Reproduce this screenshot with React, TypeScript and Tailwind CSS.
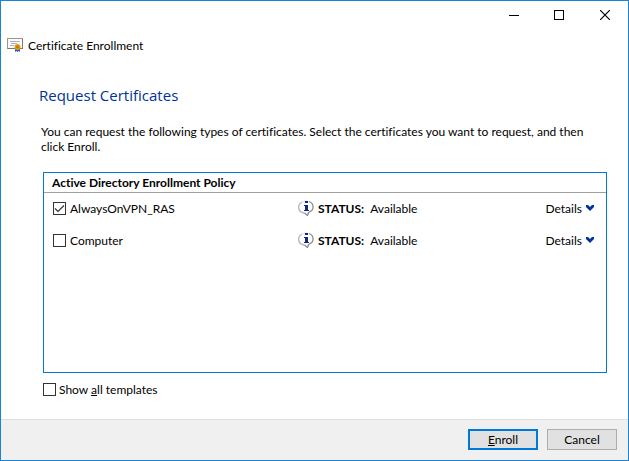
import { useState } from "react"

interface Template {
  name: string
  status: string
  checked: boolean
}

const initialTemplates: Template[] = [
  { name: "AlwaysOnVPN_RAS", status: "Available", checked: true },
  { name: "Computer", status: "Available", checked: false },
]

function CertificateIcon() {
  return (
    <svg width="16" height="16" viewBox="0 0 16 16" aria-hidden="true">
      <rect x="0.5" y="1.5" width="15" height="10" fill="#fdfcf8" stroke="#a3957f" />
      <path d="M1 11.5h15M15.5 2v10" stroke="#86775f" />
      <path d="M3 4.5h10M4 6.5h6M3 8.5h4" stroke="#a9b0e0" />
      <path d="M8 11h2.5v4l-1-1-1.500 1zM10.500 11H13v4l-1.500-1-1 1z" fill="#1f5fd0" />
      <circle cx="10.500" cy="10" r="3" fill="#e39c14" />
      <circle cx="10.500" cy="10" r="1.300" fill="#b87405" />
    </svg>
  )
}

function InfoIcon() {
  return (
    <svg width="16" height="16" viewBox="0 0 16 16" aria-hidden="true">
      <path d="M11 1.500c5.500 2 5.500 9-.5 11L9.500 15.500 6.500 13" fill="none" stroke="#8a8a8a" strokeWidth="1.300" />
      <path d="M4 2C-.5 4.500-.5 11 4.500 12.500L6.500 13" fill="none" stroke="#b5b5b5" strokeWidth="1.300" />
      <path d="M4.500 1.500a8 8 0 0 1 6 0" fill="none" stroke="#dedede" />
      <path d="M7 1h3v2H7zM6 5h4v5h1v1H6v-1h1V6H6z" fill="#10248c" />
    </svg>
  )
}

interface CheckBoxProps {
  id: string
  checked: boolean
  onChange: (checked: boolean) => void
}

function CheckBox({ id, checked, onChange }: CheckBoxProps) {
  return (
    <span className="grid shrink-0">
      <input
        id={id}
        type="checkbox"
        checked={checked}
        onChange={e => onChange(e.target.checked)}
        className="col-start-1 row-start-1 size-[13px] appearance-none border border-[#333333] bg-white"
      />
      {checked && (
        <svg
          width="13"
          height="13"
          viewBox="0 0 13 13"
          className="pointer-events-none col-start-1 row-start-1"
          aria-hidden="true"
        >
          <path d="M2 6.500l3 3 6-6" fill="none" stroke="#333" strokeWidth="1.200" />
        </svg>
      )}
    </span>
  )
}

export default function App() {
  const [templates, setTemplates] = useState(initialTemplates)
  const [showAll, setShowAll] = useState(false)

  const toggle = (index: number, checked: boolean) => {
    setTemplates(list => list.map((t, i) => (i === index ? { ...t, checked } : t)))
  }

  return (
    <div className="flex min-h-screen flex-col border border-[#1883d7] bg-white font-[Lato,'Open_Sans',sans-serif] text-[12px] leading-[15px] text-black [font-variant-ligatures:none]">
      <header>
        <div className="flex h-7 justify-end">
          <button type="button" aria-label="Minimize" className="flex w-[45px] items-center justify-center">
            <svg width="10" height="10" viewBox="0 0 10 10">
              <path d="M0 5.500h10" stroke="#000" />
            </svg>
          </button>
          <button type="button" aria-label="Maximize" className="flex w-[45px] items-center justify-center">
            <svg width="10" height="10" viewBox="0 0 10 10">
              <rect x="0.5" y="0.5" width="9" height="9" fill="none" stroke="#000" />
            </svg>
          </button>
          <button type="button" aria-label="Close" className="flex w-[47px] items-center justify-center">
            <svg width="10" height="10" viewBox="0 0 10 10">
              <path d="M0 0l10 10M10 0L0 10" stroke="#000" strokeWidth="1.200" />
            </svg>
          </button>
        </div>
        <div className="flex items-center gap-[5px] px-1.5 pt-2">
          <CertificateIcon />
          <span>Certificate Enrollment</span>
        </div>
      </header>

      <main className="flex grow flex-col pr-[21px] pl-[38px]">
        <h1 className="mt-8 font-['Open_Sans',sans-serif] text-[15px] leading-5 text-[#003399]">
          Request Certificates
        </h1>
        <p className="mt-[19px] pl-0.5">
          You can request the following types of certificates. Select the certificates you want to request, and then
          click Enroll.
        </p>

        <section className="mt-[18px] ml-1 grow border border-[#0078d7]">
          <h2 className="border-b border-[#a0a0a0] px-2 pt-0.5 pb-0.5 font-bold">Active Directory Enrollment Policy</h2>
          <ul>
            {templates.map((t, i) => (
              <li key={t.name} className="grid h-8 grid-cols-[245px_1fr_auto] items-center pr-3 pb-0.5 pl-[9px]">
                <div className="flex items-center gap-1">
                  <CheckBox id={`template-${i}`} checked={t.checked} onChange={c => toggle(i, c)} />
                  <label htmlFor={`template-${i}`}>{t.name}</label>
                </div>
                <div className="flex items-center">
                  <InfoIcon />
                  <span className="ml-1 font-bold">STATUS:</span>
                  <span className="ml-1.5">{t.status}</span>
                </div>
                <button type="button" className="flex items-center gap-1">
                  Details
                  <svg width="8" height="6" viewBox="0 0 8 6" aria-hidden="true">
                    <path d="M0 0h2l2 2 2-2h2v2L4 6 0 2z" fill="#003399" />
                  </svg>
                </button>
              </li>
            ))}
          </ul>
        </section>

        <div className="mt-[9px] mb-[22px] ml-1 flex items-center gap-[3px]">
          <CheckBox id="show-all" checked={showAll} onChange={setShowAll} />
          <label htmlFor="show-all">
            Show <u>a</u>ll templates
          </label>
        </div>
      </main>

      <footer className="flex justify-end gap-[9px] border-t border-[#dfdfdf] bg-[#f0f0f0] px-[11px] pt-[9px] pb-2.5">
        <button type="submit" className="h-[21px] w-[70px] border-2 border-[#0078d7] bg-[#e1e1e1] leading-none">
          <u>E</u>nroll
        </button>
        <button type="button" className="h-[21px] w-[70px] border border-[#adadad] bg-[#e1e1e1] leading-none">
          Cancel
        </button>
      </footer>
    </div>
  )
}
